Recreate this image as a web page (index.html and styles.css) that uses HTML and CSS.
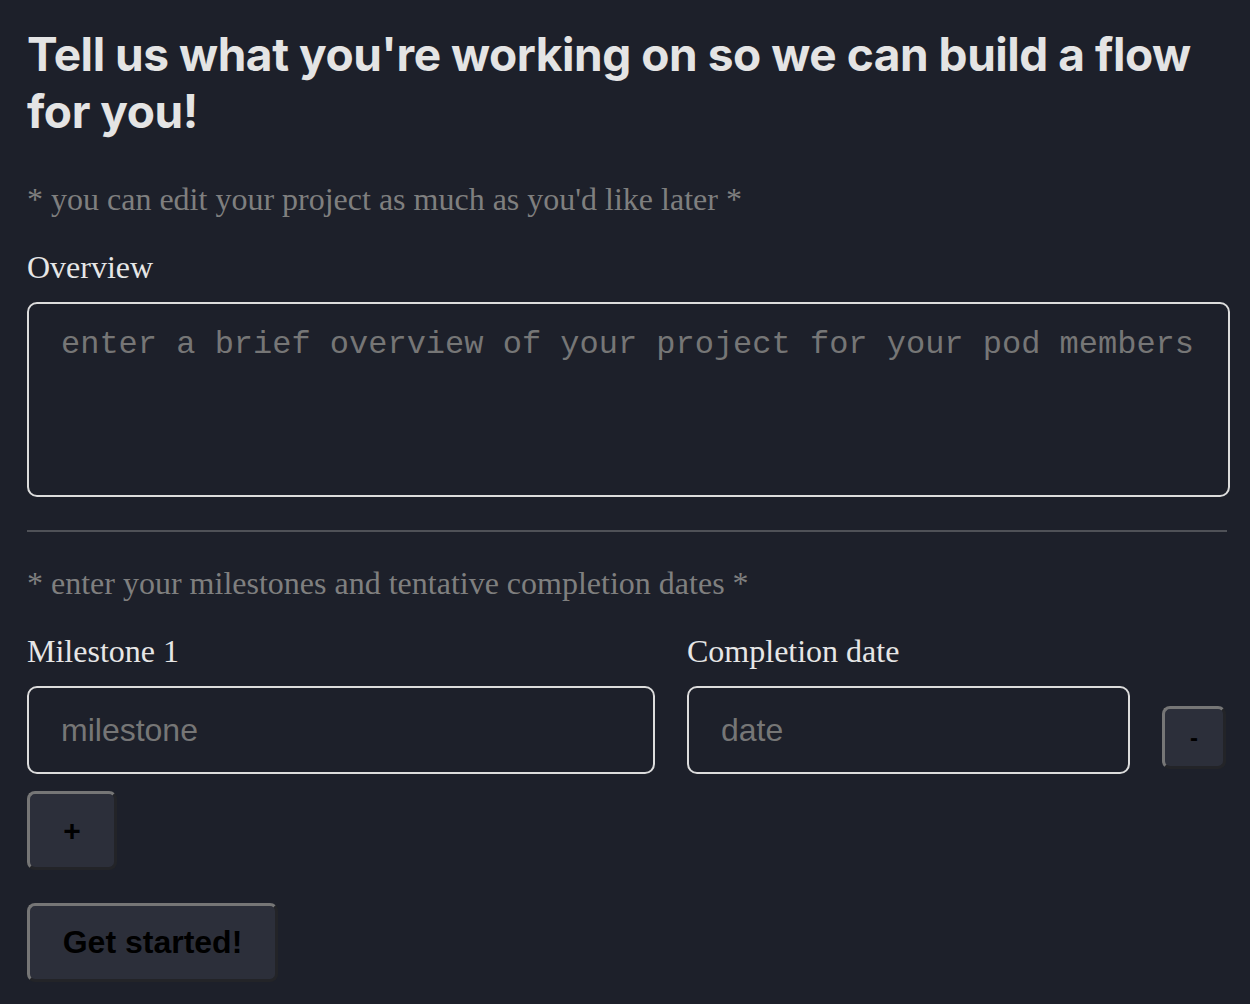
FILE: index.html
```html
<!DOCTYPE html>
<html>
<head>
<meta charset="utf-8">
<link rel="stylesheet" href="styles.css">
</head>
<body>
<div class="page">
  <h1 class="title">Tell us what you're working on so we can build a flow for you!</h1>
  <p class="note note-top">* you can edit your project as much as you'd like later *</p>
  <label class="label label-overview">Overview</label>
  <textarea class="overview" placeholder="enter a brief overview of your project for your pod members"></textarea>
  <div class="rule"></div>
  <p class="note note-mid">* enter your milestones and tentative completion dates *</p>
  <div class="milestone-row">
    <div class="field field-ms">
      <label class="label">Milestone 1</label>
      <input class="box" type="text" placeholder="milestone">
    </div>
    <div class="field field-date">
      <label class="label">Completion date</label>
      <input class="box" type="text" placeholder="date">
    </div>
    <button class="btn btn-minus">-</button>
  </div>
  <button class="btn btn-plus">+</button>
  <div class="start-wrap">
    <button class="btn btn-start">Get started!</button>
  </div>
</div>
</body>
</html>
```
FILE: styles.css
```css
html, body {
  margin: 0;
  padding: 0;
  background: #1d202a;
}
.page {
  padding: 26px 20px 0 27px;
  font-family: "Liberation Serif", serif;
}
.title {
  font-family: Inter, "Liberation Sans", sans-serif;
  font-weight: 700;
  font-size: 46px;
  line-height: 57px;
  color: #e4e4e4;
  margin: 0;
  letter-spacing: -0.45px;
}
.note {
  color: #7f7f7f;
  font-size: 32px;
  margin: 0;
  line-height: 36px;
}
.note-top {
  margin-top: 41px;
}
.label {
  display: block;
  color: #e6e6e6;
  font-size: 32px;
  line-height: 36px;
}
.label-overview {
  margin-top: 32px;
}
.overview {
  display: block;
  box-sizing: border-box;
  width: 1203px;
  height: 195px;
  margin-top: 17px;
  background: transparent;
  border: 2px solid #dcdcdc;
  border-radius: 10px;
  padding: 22px 32px;
  font-family: "Liberation Mono", monospace;
  font-size: 32px;
  color: #ddd;
  resize: none;
  outline: none;
}
.overview::placeholder, .box::placeholder {
  color: #767676;
}
.rule {
  width: 1200px;
  height: 2px;
  background: #4f5157;
  margin-top: 33px;
}
.note-mid {
  margin-top: 33px;
}
.milestone-row {
  display: flex;
  align-items: flex-end;
  gap: 32px;
  margin-top: 32px;
}
.field {
  display: flex;
  flex-direction: column;
  gap: 17px;
}
.field-ms { width: 628px; }
.field-date { width: 443px; }
.box {
  box-sizing: border-box;
  height: 88px;
  background: transparent;
  border: 2px solid #dcdcdc;
  border-radius: 10px;
  padding: 0 32px;
  font-family: "Liberation Sans", Arial, sans-serif;
  font-size: 32px;
  color: #ddd;
  outline: none;
}
.btn {
  box-sizing: border-box;
  background: #2c2f3a;
  border-style: solid;
  border-width: 3px;
  border-color: #767676 #232428 #232428 #767676;
  border-radius: 8px;
  font-family: "Liberation Sans", Arial, sans-serif;
  font-weight: 700;
  font-size: 32px;
  color: #000;
  padding: 0;
  flex-shrink: 0;
}
.btn-minus {
  width: 64px;
  height: 63px;
  font-size: 24px;
  margin-bottom: 5px;
}
.btn-plus {
  display: block;
  width: 90px;
  height: 79px;
  font-size: 30px;
  margin-top: 17px;
}
.start-wrap {
  margin-top: 33px;
}
.btn-start {
  width: 251px;
  height: 79px;
  font-size: 32px;
}
```
